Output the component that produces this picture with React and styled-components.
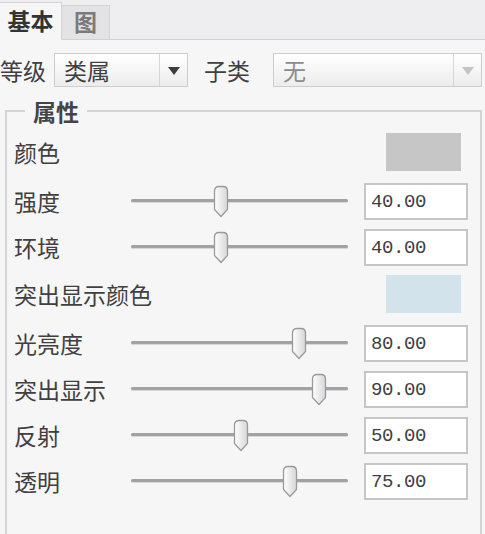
import React from "react";
import styled, { createGlobalStyle } from "styled-components";

const GlobalStyle = createGlobalStyle`
  html, body {
    margin: 0;
    padding: 0;
    overflow: hidden;
    background: #f6f6f6;
  }
  body {
    font-family: "Noto Sans CJK SC", "Noto Sans", sans-serif;
    color: #3a3a3a;
  }
`;

const Page = styled.div`
  width: 485px;
  height: 534px;
  overflow: hidden;
`;

const TabBar = styled.div`
  height: 40px;
  box-sizing: border-box;
  background: #eeeef0;
  border-bottom: 1px solid #d2d2d4;
  display: flex;
  align-items: flex-end;
`;

const Tab = styled.div`
  box-sizing: border-box;
  height: ${(p) => (p.$active ? "38px" : "35px")};
  width: ${(p) => (p.$active ? "62px" : "48px")};
  margin-bottom: -1px;
  display: flex;
  align-items: center;
  justify-content: center;
  font-size: 23px;
  font-weight: 700;
  line-height: 1;
  color: ${(p) => (p.$active ? "#333" : "#7a7a7a")};
  background: ${(p) => (p.$active ? "#f6f6f6" : "#e3e3e5")};
  border-top: 1px solid #d4d4d6;
  border-right: 1px solid #d4d4d6;
  border-bottom: 1px solid ${(p) => (p.$active ? "#f6f6f6" : "#d2d2d4")};
  padding-bottom: 2px;
`;

const FilterRow = styled.div`
  margin-top: 13px;
  height: 34px;
  display: flex;
  align-items: center;
`;

const Text = styled.span`
  font-size: 23px;
  line-height: 1;
  color: #404040;
  margin-left: ${(p) => p.$ml || 0}px;
  white-space: nowrap;
`;

const Select = styled.div`
  box-sizing: border-box;
  flex: none;
  width: ${(p) => p.$w}px;
  height: 34px;
  margin-left: ${(p) => p.$ml}px;
  border: 1px solid #cdcdcf;
  background: linear-gradient(#ffffff, #ececec);
  display: flex;
  align-items: stretch;
`;

const SelectValue = styled.div`
  flex: 1;
  display: flex;
  align-items: center;
  padding-left: 9px;
  font-size: 23px;
  line-height: 1;
  color: ${(p) => (p.$disabled ? "#8c8c8c" : "#404040")};
`;

const SelectArrow = styled.div`
  width: 27px;
  border-left: 1px solid #d6d6d8;
  display: flex;
  align-items: center;
  justify-content: center;
  &::after {
    content: "";
    width: 0;
    height: 0;
    border-left: 6px solid transparent;
    border-right: 6px solid transparent;
    border-top: 8px solid ${(p) => (p.$disabled ? "#c4c4c6" : "#3c3c3c")};
    margin-top: 2px;
  }
`;

const Fieldset = styled.fieldset`
  margin: 10px 3px 0 5px;
  padding: 8px 12px 60px 7px;
  border: 2px solid #d4d4d6;
  min-width: 0;
`;

const Legend = styled.legend`
  margin-left: 11px;
  padding: 0 8px;
  font-size: 23px;
  font-weight: 700;
  line-height: 28px;
  color: #444;
`;

const Rows = styled.div`
  display: flex;
  flex-direction: column;
  gap: 9px;
`;

const Row = styled.div`
  display: grid;
  grid-template-columns: 117px 1fr 104px;
  align-items: center;
  height: ${(p) => (p.$color ? "38px" : "37px")};
  margin-bottom: ${(p) => (p.$color ? "3px" : "0")};
`;

const Label = styled.div`
  font-size: 23px;
  line-height: 1;
  color: #404040;
  white-space: nowrap;
  grid-column: ${(p) => (p.$wide ? "1 / 3" : "auto")};
`;

const Swatch = styled.div`
  grid-column: 3;
  width: 75px;
  height: 38px;
  margin-left: 22px;
  background: ${(p) => p.$bg};
`;

const Slider = styled.div`
  position: relative;
  height: 37px;
  margin-right: 16px;
`;

const Track = styled.div`
  position: absolute;
  left: 0;
  right: 0;
  top: 16px;
  height: 3px;
  border-radius: 2px;
  background: #a2a2a2;
  box-shadow: 0 1px 0 #d8d8d8;
`;

const ThumbWrap = styled.div`
  position: absolute;
  top: 2px;
  width: 16px;
  height: 33px;
`;

const NumberBox = styled.div`
  box-sizing: border-box;
  width: 104px;
  height: 37px;
  background: #fff;
  border: 2px solid #c6c6c8;
  display: flex;
  align-items: center;
  padding-left: 5px;
  font-family: "Liberation Mono", "DejaVu Sans Mono", monospace;
  font-size: 19px;
  letter-spacing: -0.4px;
  color: #404040;
`;

function Thumb({ value }) {
  const center = 11.6 + 1.96 * value;
  return (
    <ThumbWrap style={{ left: `${center - 8}px` }}>
      <svg width="16" height="33" viewBox="0 0 16 33">
        <defs>
          <linearGradient id="tg" x1="0" y1="0" x2="1" y2="0">
            <stop offset="0" stopColor="#ffffff" />
            <stop offset="1" stopColor="#d6d6d8" />
          </linearGradient>
        </defs>
        <path
          d="M1.5 6 Q1.5 1.5 6 1.5 H10 Q14.5 1.5 14.5 6 V24.5 L8 31.5 L1.5 24.5 Z"
          fill="url(#tg)"
          stroke="#9a9a9c"
          strokeWidth="1.3"
        />
      </svg>
    </ThumbWrap>
  );
}

const sliders1 = [
  { label: "强度", value: 40 },
  { label: "环境", value: 40 },
];
const sliders2 = [
  { label: "光亮度", value: 80 },
  { label: "突出显示", value: 90 },
  { label: "反射", value: 50 },
  { label: "透明", value: 75 },
];

function SliderRow({ label, value }) {
  return (
    <Row>
      <Label>{label}</Label>
      <Slider>
        <Track />
        <Thumb value={value} />
      </Slider>
      <NumberBox>{value.toFixed(2)}</NumberBox>
    </Row>
  );
}

export default function App() {
  return (
    <Page>
      <GlobalStyle />
      <TabBar>
        <Tab $active>基本</Tab>
        <Tab>图</Tab>
      </TabBar>
      <FilterRow>
        <Text>等级</Text>
        <Select $w={134} $ml={8}>
          <SelectValue>类属</SelectValue>
          <SelectArrow />
        </Select>
        <Text $ml={16}>子类</Text>
        <Select $w={209} $ml={23}>
          <SelectValue $disabled>无</SelectValue>
          <SelectArrow $disabled />
        </Select>
      </FilterRow>
      <Fieldset>
        <Legend>属性</Legend>
        <Rows>
          <Row $color>
            <Label>颜色</Label>
            <Swatch $bg="#c6c6c7" />
          </Row>
          {sliders1.map((s) => (
            <SliderRow key={s.label} {...s} />
          ))}
          <Row $color>
            <Label $wide>突出显示颜色</Label>
            <Swatch $bg="#d3e3ec" />
          </Row>
          {sliders2.map((s) => (
            <SliderRow key={s.label} {...s} />
          ))}
        </Rows>
      </Fieldset>
    </Page>
  );
}
